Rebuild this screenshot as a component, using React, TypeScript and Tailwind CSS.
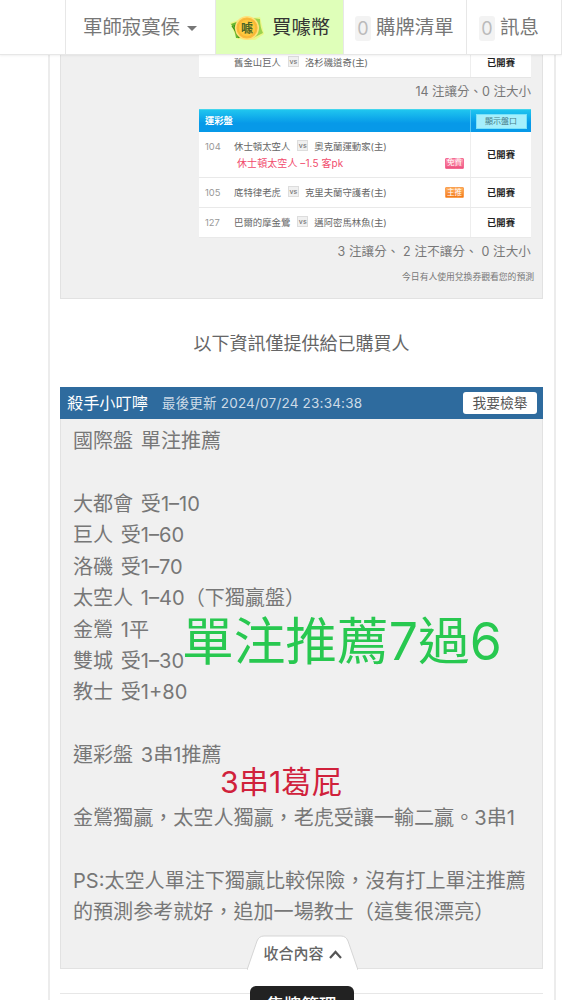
import { ReactNode } from 'react'

const posts = [
  '國際盤 單注推薦',
  '',
  '大都會 受1–10',
  '巨人 受1–60',
  '洛磯 受1–70',
  '太空人 1–40（下獨贏盤）',
  '金鶯 1平',
  '雙城 受1–30',
  '教士 受1+80',
  '',
  '運彩盤 3串1推薦',
  '',
  '金鶯獨贏，太空人獨贏，老虎受讓一輸二贏。3串1',
  '',
  'PS:太空人單注下獨贏比較保險，沒有打上單注推薦',
  '的預測参考就好，追加一場教士（這隻很漂亮）',
]

function Versus({ away, home }: { away: string; home: string }) {
  return (
    <div className="flex items-center text-[9.4px] leading-[14px] text-[#666]">
      <span>{away}</span>
      <span className="mr-[6px] mb-[3px] ml-[7px] flex h-[11px] w-[11px] items-center justify-center border border-[#ddd] bg-[#f0f0f0] text-[7px] leading-none font-medium text-[#777]">
        vs
      </span>
      <span>{home}</span>
    </div>
  )
}

function Status() {
  return (
    <div className="flex w-[61px] shrink-0 items-center justify-center border-l border-[#eee] text-[9.3px] font-bold text-[#222]">
      已開賽
    </div>
  )
}

function Row({ no, away, home, children }: { no: string; away: string; home: string; children?: ReactNode }) {
  return (
    <div className="flex h-[30px] border-b border-[#e9e9e9] bg-white">
      <div className="flex grow items-center pr-[6px] pl-[6px]">
        <span className="w-[29px] text-[9.4px] leading-[14px] text-[#999]">{no}</span>
        <Versus away={away} home={home} />
        {children}
      </div>
      <Status />
    </div>
  )
}

function NavCount({ label }: { label: string }) {
  return (
    <>
      <span className="mr-[5px] flex h-[25px] w-[16px] items-center justify-center rounded-[3px] bg-[#f3f3f3] text-[18px] text-[#bbb]">0</span>
      <span>{label}</span>
    </>
  )
}

export default function App() {
  return (
    <div className="flex h-[1000px] w-[562px] flex-col overflow-hidden bg-white font-['Inter','Noto_Sans_CJK_TC',sans-serif] whitespace-nowrap text-[#777]">
      <nav className="z-10 flex h-[55px] shrink-0 border-b border-[#e7e7e7] bg-white pl-[65px] text-[19.4px] shadow-[0_1px_2px_rgba(0,0,0,0.06)]">
        <div className="flex w-[150px] items-center border-l border-[#e7e7e7] pt-[2px] pl-[17px]">
          軍師寂寞侯
          <span className="ml-[7px] border-x-[5px] border-t-[5px] border-x-transparent border-t-[#777]" />
        </div>
        <div className="flex w-[128px] items-center border-l border-[#e7e7e7] bg-[#dfffb9] pt-[2px] pl-[13px] text-[#333]">
          <svg width="36" height="28" viewBox="0 0 36 28" className="mr-[7px]">
            <defs>
              <radialGradient id="coin">
                <stop offset="0" stopColor="#ffda58" />
                <stop offset="0.65" stopColor="#ffc83c" />
                <stop offset="1" stopColor="#f9b437" />
              </radialGradient>
            </defs>
            <path d="M1 9 L12 5 L31 3 L35 20 L26 26 L8 25 Z" fill="#eef57a" opacity="0.8" />
            <path d="M2 10 L13 6 L17 24 L7 24 Q6 16 2 10 Z" fill="#69b932" />
            <path d="M22 4 L31 5 Q31 13 34 19 L24 24 Z" fill="#9bd24c" />
            <path d="M3 12 Q8 19 10 24 M5 11 L10 20" fill="none" stroke="#3d8f20" strokeWidth="1.2" />
            <circle cx="18" cy="14" r="11.3" fill="url(#coin)" stroke="#ffe17b" strokeWidth="1.5" />
            <circle cx="18" cy="14" r="9" fill="none" stroke="#f2a93a" strokeWidth="0.6" />
            <text x="18" y="18.5" textAnchor="middle" fontSize="12" fontWeight="700" fill="#4c6425" fontFamily="'Noto Sans CJK TC', sans-serif">噱</text>
          </svg>
          買噱幣
        </div>
        <div className="flex w-[123px] items-center border-l border-[#e7e7e7] pt-[2px] pl-[11px]">
          <NavCount label="購牌清單" />
        </div>
        <div className="flex w-[96px] items-center border-x border-[#e7e7e7] pt-[2px] pl-[12px]">
          <NavCount label="訊息" />
        </div>
      </nav>

      <main className="ml-[48px] h-[945px] w-[508px] border-r-2 border-l-2 border-[#ececec] pr-[11px] pl-[10px]">
        <section className="flex h-[244px] flex-col items-end border-r border-b border-l border-[#e2e2e2] bg-[#f0f0f0] pr-[11px]">
          <div className="flex h-[23px] w-[332px] border-b border-[#e5e5e5] bg-white">
            <div className="grow pt-px pl-[35px]">
              <Versus away="舊金山巨人" home="洛杉磯道奇(主)" />
            </div>
            <div className="flex w-[61px] items-start justify-center border-l border-[#eee] pt-px text-[9.3px] leading-[14px] font-bold text-[#222]">已開賽</div>
          </div>
          <p className="mt-[5px] text-[12.5px] leading-[18px]">14 注讓分、0 注大小</p>

          <div className="mt-[8px] w-[332px]">
            <div className="flex h-[23px] border-t border-[#44d5ed] bg-linear-to-b from-[#20c5ef] to-[#0799e8] to-60%">
              <div className="flex grow items-center pl-[6px] text-[9.3px] font-bold text-white">運彩盤</div>
              <div className="flex w-[61px] items-center justify-center border-l border-[#55c8f4]">
                <span className="flex h-[15px] w-[51px] items-center justify-center border border-[#78e2fa] bg-[#a5effc] text-[8px] text-[#477c88]">顯示盤口</span>
              </div>
            </div>
            <div className="flex h-[46px] border-b border-[#e9e9e9] bg-white">
              <div className="grow pt-[8px] pr-[6px] pl-[6px]">
                <div className="flex items-center">
                  <span className="w-[29px] text-[9.4px] leading-[14px] text-[#999]">104</span>
                  <Versus away="休士頓太空人" home="奧克蘭運動家(主)" />
                </div>
                <div className="flex items-center justify-between pl-[32px]">
                  <span className="text-[10px] leading-[18px] tracking-[0.08px] text-[#f14b6c]">休士頓太空人 –1.5 客pk</span>
                  <span className="flex h-[11px] w-[19px] items-center justify-center rounded-[1px] border border-[#f36b93] bg-linear-to-b from-[#ff9bb5] to-[#ee517f] text-[7.5px] leading-none text-white">免費</span>
                </div>
              </div>
              <Status />
            </div>
            <Row no="105" away="底特律老虎" home="克里夫蘭守護者(主)">
              <span className="ml-auto flex h-[11px] w-[19px] items-center justify-center rounded-[1px] border border-[#f9a052] bg-linear-to-b from-[#ffb05d] to-[#f27812] text-[7.5px] leading-none text-white">主推</span>
            </Row>
            <Row no="127" away="巴爾的摩金鶯" home="邁阿密馬林魚(主)" />
          </div>
          <p className="mt-[5px] text-[12.5px] leading-[18px] tracking-[0.14px]">3 注讓分、 2 注不讓分、 0 注大小</p>
          <p className="-mr-[3px] mt-[8px] text-[8.8px] leading-[16px]">今日有人使用兌換券觀看您的預測</p>
        </section>

        <p className="flex h-[88px] items-center justify-center text-[18px] text-[#666]">以下資訊僅提供給已購買人</p>

        <section className="relative h-[582px] border border-[#e2e2e2] bg-[#f0f0f0]">
          <header className="-mx-px -mt-px flex h-[32px] items-center bg-[#2e6b9e] pr-[6px] pl-[7px] text-white">
            <h2 className="text-[16.2px]">殺手小叮嚀</h2>
            <span className="ml-[14px] text-[13.5px] tracking-[0.2px] text-[#cddbe7]">最後更新 2024/07/24 23:34:38</span>
            <button className="ml-auto h-[22px] w-[74px] rounded-[3px] bg-white text-[13.8px] leading-[22px] text-[#555]">我要檢舉</button>
          </header>
          <div className="pt-[7px] pl-[12px] text-[20.07px] leading-[31.43px] [word-spacing:2px]">
            {posts.map((line, i) => (
              <p key={i} className="h-[31.43px]">{line}</p>
            ))}
          </div>

          {/* notes laid over the post */}
          <p className="absolute top-[217px] left-[121px] text-[51.7px] leading-[72px] text-[#28c850]">單注推薦7過6</p>
          <p className="absolute top-[373px] left-[159px] text-[30.3px] leading-[42px] text-[#d0213b]">3串1葛屁</p>

          <button className="absolute bottom-[-2px] left-[186px] flex h-[35px] w-[111px] items-center justify-center text-[15px] font-medium text-[#666]">
            <svg width="111" height="35" viewBox="0 0 111 35" className="absolute inset-0">
              <path d="M0 35 L10 6 Q12 1 17 1 L94 1 Q99 1 101 6 L111 35" fill="#fff" stroke="#d5d5d5" />
            </svg>
            <span className="relative mt-[3px]">收合內容</span>
            <svg width="13" height="9" viewBox="0 0 13 9" className="relative mt-[3px] ml-[5px]">
              <path d="M1 8 L6.5 2 L12 8" fill="none" stroke="#555" strokeWidth="2.2" />
            </svg>
          </button>
        </section>

        <footer className="mt-[24px] flex justify-center border-t border-[#e7e7e7]">
          <button className="-mt-[8px] flex h-[42px] w-[104px] items-start justify-center rounded-[6px] bg-[#222] pt-[8px] text-[17.5px] leading-[22px] font-medium text-white">
            售牌管理
          </button>
        </footer>
      </main>
    </div>
  )
}
